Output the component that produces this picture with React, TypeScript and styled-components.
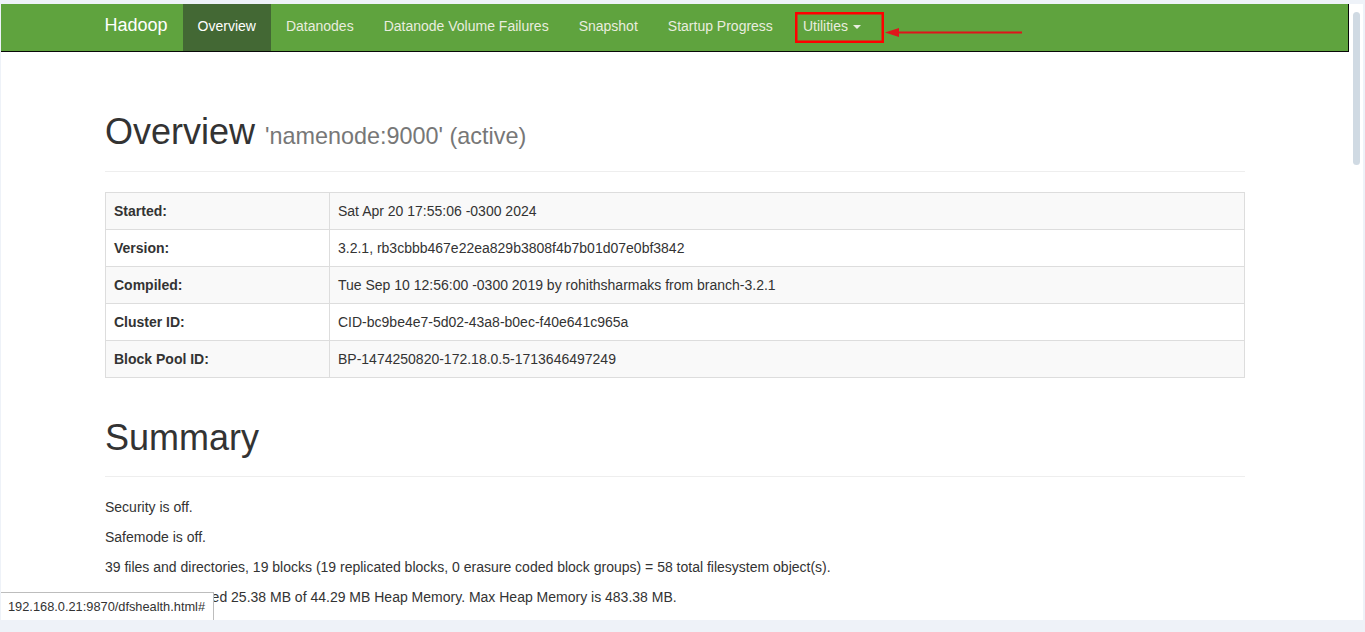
import React from "react";
import styled, { createGlobalStyle } from "styled-components";

const GlobalStyle = createGlobalStyle`
  html, body {
    margin: 0;
    padding: 0;
    background: #eef2f8;
  }
  * { box-sizing: border-box; }
  body {
    font-family: "Liberation Sans", Arial, Helvetica, sans-serif;
    font-size: 14px;
    line-height: 20px;
    color: #333;
  }
`;

const Frame = styled.div`
  width: 1365px;
  height: 632px;
  padding: 4px 2px 12px 1px;
  display: flex;
  background: #eef2f8;
`;

const Viewport = styled.div`
  flex: 1;
  position: relative;
  overflow: hidden;
  background: #fff;
`;

const ScrollTrack = styled.div`
  width: 14px;
  background: #fff;
  padding: 8px 3px 0 4px;
`;

const ScrollThumb = styled.div`
  width: 7px;
  height: 153px;
  border-radius: 4px;
  background: #d0dae3;
`;

const Navbar = styled.header`
  height: 48px;
  background: #5fa33e;
  border-bottom: 1px solid #080808;
  border-right: 1px solid #080808;
  margin-bottom: 20px;
`;

const NavContainer = styled.div`
  width: 1170px;
  margin: 0 auto;
  padding: 0 15px;
  display: flex;
  height: 47px;
`;

const Brand = styled.a`
  margin-left: -15px;
  padding: 11px 15px;
  font-size: 18px;
  line-height: 20px;
  color: #fff;
  text-decoration: none;
`;

const NavList = styled.ul`
  display: flex;
  margin: 0;
  padding: 0;
  list-style: none;
`;

const NavItem = styled.li`
  position: relative;
  display: flex;
`;

const NavLink = styled.a<{ $active?: boolean }>`
  display: block;
  padding: 12px 15px 15px;
  font-size: 14px;
  line-height: 20px;
  color: ${(p) => (p.$active ? "#fff" : "#e9eddf")};
  background: ${(p) => (p.$active ? "#436834" : "transparent")};
  text-decoration: none;
  white-space: nowrap;
`;

const Caret = styled.span`
  display: inline-block;
  width: 0;
  height: 0;
  margin-left: 5px;
  vertical-align: middle;
  border-top: 4px solid #e9eddf;
  border-left: 4px solid transparent;
  border-right: 4px solid transparent;
`;

const Annotation = styled.svg`
  position: absolute;
  left: 7px;
  top: 8px;
  overflow: visible;
  pointer-events: none;
`;

const Main = styled.main`
  display: flow-root;
  width: 1170px;
  margin: 0 auto;
  padding: 0 15px;
`;

const PageHeader = styled.div`
  margin: 40px 0 20px;
  padding-bottom: 9px;
  border-bottom: 1px solid #eee;
`;

const H1 = styled.h1`
  margin: 20px 0 10px;
  font-size: 36px;
  line-height: 1.1;
  font-weight: 500;
  color: #333;
`;

const Small = styled.small`
  font-size: 65%;
  font-weight: normal;
  color: #777;
`;

const InfoTable = styled.table`
  width: 100%;
  border-collapse: collapse;
  border: 1px solid #ddd;
  margin-bottom: 20px;
`;

const Row = styled.tr`
  &:nth-child(odd) {
    background: #f9f9f9;
  }
`;

const HeadCell = styled.th`
  width: 224px;
  padding: 8px;
  border: 1px solid #ddd;
  text-align: left;
  font-weight: bold;
  line-height: 20px;
  vertical-align: top;
`;

const Cell = styled.td`
  padding: 8px;
  border: 1px solid #ddd;
  line-height: 20px;
  vertical-align: top;
`;

const Para = styled.p`
  margin: 0 0 10px;
`;

const StatusBubble = styled.div`
  position: absolute;
  left: 0;
  bottom: 0;
  width: 213px;
  height: 28px;
  display: flex;
  align-items: center;
  padding-left: 7px;
  background: #fff;
  border-top: 1px solid #bdbdbd;
  border-right: 1px solid #bdbdbd;
  font-family: "Liberation Sans", Arial, sans-serif;
  font-size: 12.8px;
  color: #333;
  white-space: nowrap;
`;

const navItems = [
  "Overview",
  "Datanodes",
  "Datanode Volume Failures",
  "Snapshot",
  "Startup Progress",
];

const info: [string, string][] = [
  ["Started:", "Sat Apr 20 17:55:06 -0300 2024"],
  ["Version:", "3.2.1, rb3cbbb467e22ea829b3808f4b7b01d07e0bf3842"],
  ["Compiled:", "Tue Sep 10 12:56:00 -0300 2019 by rohithsharmaks from branch-3.2.1"],
  ["Cluster ID:", "CID-bc9be4e7-5d02-43a8-b0ec-f40e641c965a"],
  ["Block Pool ID:", "BP-1474250820-172.18.0.5-1713646497249"],
];

export default function App() {
  return (
    <>
      <GlobalStyle />
      <Frame>
        <Viewport>
          <Navbar>
            <NavContainer>
              <Brand href="#">Hadoop</Brand>
              <NavList>
                {navItems.map((n, i) => (
                  <NavItem key={n}>
                    <NavLink href="#" $active={i === 0}>
                      {n}
                    </NavLink>
                  </NavItem>
                ))}
                <NavItem>
                  <NavLink href="#">
                    Utilities
                    <Caret />
                  </NavLink>
                  <Annotation width="230" height="32" viewBox="0 0 230 32">
                    <rect x="1.25" y="1.25" width="86.5" height="28.5" fill="none" stroke="#ff0000" strokeWidth="2.5" />
                    <line x1="100" y1="20.5" x2="227" y2="20.5" stroke="#e0141b" strokeWidth="2" />
                    <polygon points="90,20.5 104,16 104,25" fill="#e0141b" />
                  </Annotation>
                </NavItem>
              </NavList>
            </NavContainer>
          </Navbar>

          <Main>
            <PageHeader>
              <H1>
                Overview <Small>'namenode:9000' (active)</Small>
              </H1>
            </PageHeader>
            <InfoTable>
              <tbody>
                {info.map(([k, v]) => (
                  <Row key={k}>
                    <HeadCell>{k}</HeadCell>
                    <Cell>{v}</Cell>
                  </Row>
                ))}
              </tbody>
            </InfoTable>

            <PageHeader>
              <H1>Summary</H1>
            </PageHeader>
            <Para>Security is off.</Para>
            <Para>Safemode is off.</Para>
            <Para>
              39 files and directories, 19 blocks (19 replicated blocks, 0 erasure coded block groups) = 58 total filesystem object(s).
            </Para>
            <Para>Heap Memory used 25.38 MB of 44.29 MB Heap Memory. Max Heap Memory is 483.38 MB.</Para>
          </Main>

          <StatusBubble>192.168.0.21:9870/dfshealth.html#</StatusBubble>
        </Viewport>
        <ScrollTrack>
          <ScrollThumb />
        </ScrollTrack>
      </Frame>
    </>
  );
}
